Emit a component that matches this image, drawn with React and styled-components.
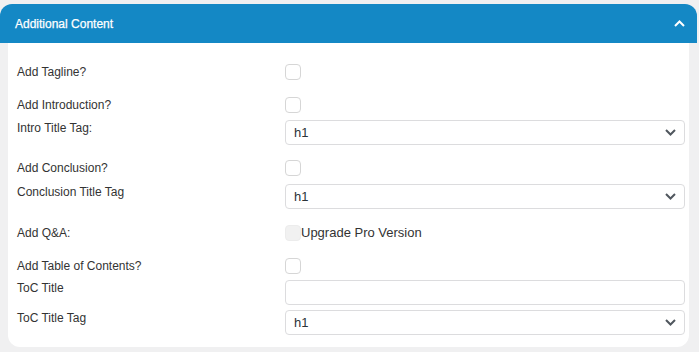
import React from "react";
import styled, { createGlobalStyle } from "styled-components";

const GlobalStyle = createGlobalStyle`
  html, body {
    margin: 0;
    padding: 0;
    background: #f0f0f1;
  }
  body {
    font-family: "Liberation Sans", Arial, sans-serif;
  }
`;

const Page = styled.div`
  width: 699px;
  height: 352px;
  padding-top: 4px;
  box-sizing: border-box;
  background: #f0f0f1;
`;

const PanelHeader = styled.div`
  display: flex;
  align-items: center;
  justify-content: space-between;
  height: 39px;
  margin-right: 2px;
  padding: 0 12px 0 15px;
  box-sizing: border-box;
  background: #1488c5;
  border-radius: 12px 12px 0 0;
  color: #fff;
  font-size: 12px;
  -webkit-text-stroke: 0.25px #fff;
`;

const PanelBody = styled.div`
  margin: 0 10px 0 8px;
  padding: 21px 0 12px 9px;
  background: #fff;
  border-radius: 0 0 12px 12px;
`;

const Row = styled.div`
  display: grid;
  grid-template-columns: 268px 400px;
  align-items: start;
  margin-top: ${props => props.gap || 0}px;
`;

const Label = styled.div`
  font-size: 12px;
  line-height: 16px;
  color: #333;
`;

const Field = styled.div`
  display: flex;
  align-items: center;
  position: relative;
`;

const Checkbox = styled.span`
  display: inline-block;
  width: 16px;
  height: 16px;
  box-sizing: border-box;
  border: 1px solid ${props => (props.disabled ? "#ececec" : "#d6d6d6")};
  border-radius: 4px;
  background: ${props => (props.disabled ? "#f1f1f1" : "#fff")};
`;

const Upgrade = styled.span`
  font-size: 13px;
  line-height: 16px;
  color: #333;
`;

const SelectBox = styled.select`
  width: 400px;
  height: 25px;
  box-sizing: border-box;
  padding: 0 8px;
  border: 1px solid #dcdcde;
  border-radius: 4px;
  background: #fff;
  color: #2c3338;
  font-family: "Liberation Sans", Arial, sans-serif;
  font-size: 13px;
  appearance: none;
  -webkit-appearance: none;
  outline: none;
`;

const Chevron = styled.svg`
  position: absolute;
  right: 9px;
  top: 9px;
  pointer-events: none;
`;

const TextInput = styled.input`
  width: 400px;
  height: 25px;
  box-sizing: border-box;
  border: 1px solid #dcdcde;
  border-radius: 4px;
  background: #fff;
  outline: none;
`;

const Select = () => (
  <Field>
    <SelectBox defaultValue="h1">
      <option>h1</option>
      <option>h2</option>
      <option>h3</option>
    </SelectBox>
    <Chevron width="11" height="7" viewBox="0 0 11 7">
      <path d="M1 1l4.5 4.5L10 1" fill="none" stroke="#50575e" strokeWidth="2" />
    </Chevron>
  </Field>
);

export default function App() {
  return (
    <Page>
      <GlobalStyle />
      <PanelHeader>
        <span>Additional Content</span>
        <svg width="11" height="7" viewBox="0 0 11 7">
          <path d="M1 6l4.5-4.5L10 6" fill="none" stroke="#fff" strokeWidth="2" />
        </svg>
      </PanelHeader>
      <PanelBody>
        <Row>
          <Label>Add Tagline?</Label>
          <Field><Checkbox /></Field>
        </Row>
        <Row gap={17}>
          <Label>Add Introduction?</Label>
          <Field><Checkbox /></Field>
        </Row>
        <Row gap={7}>
          <Label>Intro Title Tag:</Label>
          <Select />
        </Row>
        <Row gap={15}>
          <Label>Add Conclusion?</Label>
          <Field><Checkbox /></Field>
        </Row>
        <Row gap={8}>
          <Label>Conclusion Title Tag</Label>
          <Select />
        </Row>
        <Row gap={16}>
          <Label>Add Q&amp;A:</Label>
          <Field>
            <Checkbox disabled />
            <Upgrade>Upgrade Pro Version</Upgrade>
          </Field>
        </Row>
        <Row gap={17}>
          <Label>Add Table of Contents?</Label>
          <Field><Checkbox /></Field>
        </Row>
        <Row gap={6}>
          <Label>ToC Title</Label>
          <Field><TextInput type="text" /></Field>
        </Row>
        <Row gap={5}>
          <Label>ToC Title Tag</Label>
          <Select />
        </Row>
      </PanelBody>
    </Page>
  );
}
